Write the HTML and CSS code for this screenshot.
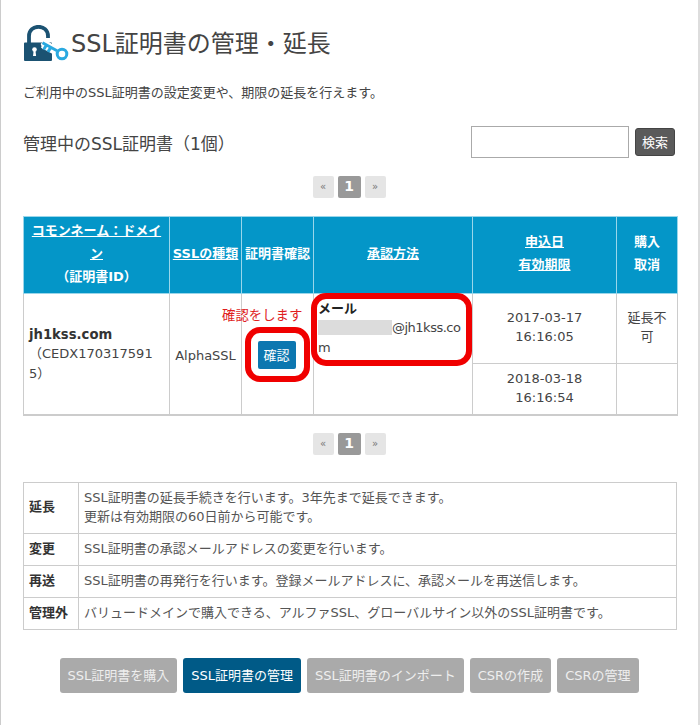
FILE: index.html
```html
<!DOCTYPE html>
<html lang="ja">
<head>
<meta charset="utf-8">
<title>SSL証明書の管理・延長</title>
<link rel="stylesheet" href="styles.css">
</head>
<body>
<main class="page">
  <header class="title-row">
    <svg class="logo" viewBox="0 0 46 38" width="46" height="38" aria-hidden="true">
      <path d="M6 18V11C6 5 10.500 1.800 15.500 1.800S25 5 25 11v2" fill="none" stroke="#1b5272" stroke-width="3.800"/>
      <path d="M1 18.500a1 1 0 0 1 1-1h26a1 1 0 0 1 1 1V35a1 1 0 0 1-1 1H2a1 1 0 0 1-1-1z" fill="#1b5272"/>
      <circle cx="11.500" cy="24.500" r="2.300" fill="#fff"/>
      <path d="M10.700 25h1.700l.7 6h-3.100z" fill="#fff"/>
      <path d="M20 19l14 7.500" stroke="#fff" stroke-width="8.500" fill="none"/>
      <path d="M21.500 23.500l-1.500-4 2-2.200 12 7" stroke="#fff" stroke-width="4" fill="none"/>
      <circle cx="39" cy="29" r="7" fill="#fff"/>
      <path d="M19.500 17.800l14.500 8M23.500 20l-2.800 4.500M27.800 22.400l-2.800 4.500" stroke="#2aa9e0" stroke-width="3" fill="none"/>
      <circle cx="39" cy="29" r="4.800" fill="#fff" stroke="#2aa9e0" stroke-width="3"/>
    </svg>
    <h1 class="title">SSL証明書の管理・延長</h1>
  </header>
  <p class="lead">ご利用中のSSL証明書の設定変更や、期限の延長を行えます。</p>

  <section class="list-head">
    <h2 class="subtitle">管理中のSSL証明書（1個）</h2>
    <form class="search">
      <input class="search-input" type="text" aria-label="検索">
      <button class="search-button" type="button">検索</button>
    </form>
  </section>

  <nav class="pager pager-top">
    <span class="page-item">«</span><span class="page-item current">1</span><span class="page-item">»</span>
  </nav>

  <div class="table-wrap">
    <table class="cert-table">
      <colgroup>
        <col class="c1"><col class="c2"><col class="c3"><col class="c4"><col class="c5"><col class="c6">
      </colgroup>
      <thead>
        <tr>
          <th><a href="#">コモンネーム：ドメイン</a><br>（証明書ID）</th>
          <th><a href="#">SSLの種類</a></th>
          <th>証明書確認</th>
          <th><a href="#">承認方法</a></th>
          <th><a href="#">申込日</a><br><a href="#">有効期限</a></th>
          <th>購入<br>取消</th>
        </tr>
      </thead>
      <tbody>
        <tr class="row-a">
          <td rowspan="2" class="domain"><b>jh1kss.com</b><br>（CEDX1703175915）</td>
          <td rowspan="2" class="center tall">AlphaSSL</td>
          <td rowspan="2" class="center tall"><button class="confirm" type="button">確認</button></td>
          <td rowspan="2" class="method"><b>メール</b><br><span class="masked"></span><span class="email">@jh1kss.com</span></td>
          <td class="center">2017-03-17<br>16:16:05</td>
          <td class="center">延長不可</td>
        </tr>
        <tr class="row-b">
          <td class="center">2018-03-18<br>16:16:54</td>
          <td></td>
        </tr>
      </tbody>
    </table>
    <span class="note">確認をします</span>
    <span class="mark mark-confirm"></span>
    <span class="mark mark-method"></span>
  </div>

  <nav class="pager pager-bottom">
    <span class="page-item">«</span><span class="page-item current">1</span><span class="page-item">»</span>
  </nav>

  <table class="legend">
    <tr><th>延長</th><td>SSL証明書の延長手続きを行います。3年先まで延長できます。<br>更新は有効期限の60日前から可能です。</td></tr>
    <tr><th>変更</th><td>SSL証明書の承認メールアドレスの変更を行います。</td></tr>
    <tr><th>再送</th><td>SSL証明書の再発行を行います。登録メールアドレスに、承認メールを再送信します。</td></tr>
    <tr><th>管理外</th><td>バリュードメインで購入できる、アルファSSL、グローバルサイン以外のSSL証明書です。</td></tr>
  </table>

  <nav class="actions">
    <a class="action" href="#">SSL証明書を購入</a>
    <a class="action active" href="#">SSL証明書の管理</a>
    <a class="action" href="#">SSL証明書のインポート</a>
    <a class="action" href="#">CSRの作成</a>
    <a class="action" href="#">CSRの管理</a>
  </nav>
</main>
</body>
</html>
```
FILE: styles.css
```css
* { box-sizing: border-box; }
html, body { margin: 0; padding: 0; background: #fff; }
body {
  font-family: "DejaVu Sans", "Noto Sans CJK JP", sans-serif;
  font-size: 13px;
  line-height: 19.2px;
  color: #444;
}
.page {
  width: 700px;
  height: 725px;
  padding: 25px 23px 0 22px;
  border-left: 1px solid #ccc;
  border-right: 2px solid #ddd;
  overflow: hidden;
}
.title-row { display: flex; align-items: flex-start; height: 38px; }
.logo { flex: none; display: block; margin-right: 2px; }
.title {
  margin: 0;
  padding-top: 3px;
  font-size: 24px;
  line-height: 32px;
  font-weight: 400;
  color: #444;
}
.lead { margin: 20px 0 0; }
.list-head {
  display: flex;
  justify-content: space-between;
  align-items: center;
  margin-top: 24px;
  height: 32px;
}
.subtitle { margin: 0; padding-top: 3px; font-size: 17px; line-height: 26px; font-weight: 400; }
.search { display: flex; align-items: center; gap: 6px; }
.search-input { width: 158px; height: 32px; margin: 0; border: 1px solid #aaa; background: #fff; padding: 0 6px; }
.search-button {
  width: 40px;
  height: 28px;
  padding: 0;
  border: 1px solid #444;
  border-radius: 3px;
  background: #5a5a5a;
  color: #fff;
  font: inherit;
}
.pager { display: flex; justify-content: center; gap: 4px; }
.pager-top { margin-top: 18px; }
.pager-bottom { margin-top: 17px; }
.page-item {
  width: 21px;
  height: 22px;
  border-radius: 2px;
  background: #e5e5e5;
  color: #777;
  font-size: 10px;
  line-height: 21px;
  text-align: center;
}
.page-item.current { width: 23px; background: #999; color: #fff; font-size: 14px; font-weight: 700; }
.table-wrap { position: relative; margin-top: 18px; width: 654px; }
.cert-table { width: 654px; border-collapse: collapse; table-layout: fixed; }
.c1 { width: 146px; }
.c2 { width: 72px; }
.c3 { width: 72px; }
.c4 { width: 159px; }
.c5 { width: 144px; }
.c6 { width: 61px; }
.cert-table th {
  height: 77px;
  padding: 1px 2px 5px;
  background: #0496c8;
  border: 1px solid #9ad6ea;
  color: #fff;
  font-size: 13px;
  line-height: 23px;
  font-weight: 700;
  text-align: center;
}
.cert-table th a { color: #fff; text-decoration: underline; }
.cert-table td {
  padding: 5px 5px 8px;
  border: 1px solid #ccc;
  overflow-wrap: anywhere;
  vertical-align: middle;
}
.cert-table tbody { border-bottom: 2px solid #ccc; }
.row-a { height: 70px; }
.row-b { height: 51px; }
.cert-table .row-b td { padding: 4px 5px 5px; }
.center { text-align: center; }
.cert-table .tall { padding: 8px 5px 5px; }
.cert-table .domain { padding: 6px 12px 6px 5px; }
.domain b { color: #333; font-size: 13.200px; }
.cert-table .method { vertical-align: top; padding: 5px 4px; word-break: break-all; }
.method b { color: #222; }
.masked { display: inline-block; width: 74px; height: 15px; background: #dcdcdc; vertical-align: -3px; }
.email { letter-spacing: -0.5px; }
.confirm {
  width: 38px;
  height: 28px;
  margin-right: 2px;
  padding: 0;
  border: 0;
  border-radius: 2px;
  background: #0c77b0;
  color: #fff;
  font: inherit;
}
.note { position: absolute; left: 199px; top: 90px; color: #e01e1e; font-size: 13.400px; line-height: 20px; white-space: nowrap; }
.mark { position: absolute; border: 6px solid #f00000; border-radius: 15px; }
.mark-confirm { left: 222px; top: 111px; width: 65px; height: 55px; }
.mark-method { left: 288px; top: 77px; width: 161px; height: 73px; }
.legend { width: 654px; margin-top: 27px; border-collapse: collapse; table-layout: fixed; }
.legend th, .legend td { border: 1px solid #ccc; padding: 5px 5px 7px; text-align: left; font-size: 13px; line-height: 19px; }
.legend th { width: 55px; color: #333; font-weight: 700; }
.legend td { color: #555; }
.actions { display: flex; justify-content: center; gap: 6px; margin-top: 28px; }
.action {
  height: 35px;
  padding: 0 8px;
  border-radius: 3px;
  background: #aaa;
  color: #eee;
  font-size: 13px;
  line-height: 35px;
  text-decoration: none;
  white-space: nowrap;
}
.action.active { background: #005a87; color: #fff; }
```
